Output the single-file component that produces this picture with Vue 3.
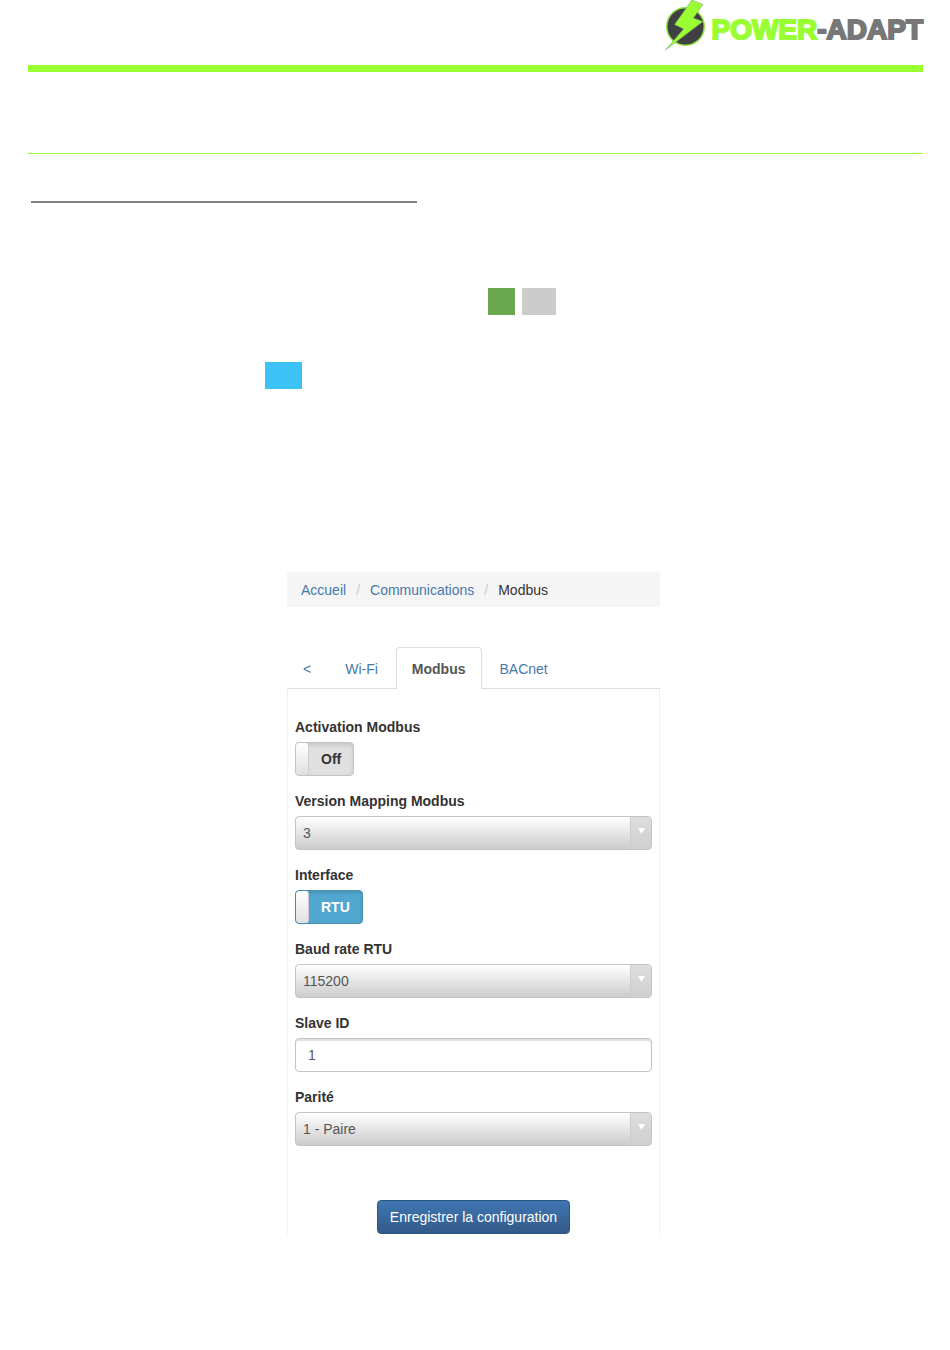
<template>
  <div class="page">
    <header class="page-header">
      <a class="brand" href="#" aria-label="Power-Adapt">
        <svg class="brand-mark" viewBox="0 0 42 52" aria-hidden="true">
          <circle cx="20.5" cy="26.5" r="19.5" fill="#8fe03c" />
          <circle cx="20.5" cy="26.5" r="18" fill="#3f4043" />
          <path d="M27 0 L38 4.5 L28.5 18 L38 21.5 L0.5 50 L18.5 29 L9.5 24.5 Z" fill="#99ff33" stroke="#7d8a70" stroke-width="0.5" />
        </svg>
        <span class="brand-name"><span class="brand-power">POWER</span>-ADAPT</span>
      </a>
    </header>

    <hr class="rule-thin" />
    <hr class="rule-title" />

    <div class="swatches">
      <span class="swatch swatch-green"></span>
      <span class="swatch swatch-grey"></span>
    </div>
    <div class="swatches swatches-second">
      <span class="swatch swatch-blue"></span>
    </div>

    <main class="screen">
      <nav class="breadcrumb" aria-label="Breadcrumb">
        <a href="#">Accueil</a>
        <span class="separator">/</span>
        <a href="#">Communications</a>
        <span class="separator">/</span>
        <span>Modbus</span>
      </nav>

      <nav class="tabs">
        <a v-for="tab in tabs" :key="tab" class="tab" :class="{ active: tab === 'Modbus' }" href="#">{{ tab }}</a>
      </nav>

      <form class="panel" @submit.prevent>
        <div v-for="field in fields" :key="field.id" class="field">
          <label class="field-label" :for="field.id">{{ field.label }}</label>

          <div v-if="field.type === 'switch'" class="switch" :class="{ on: field.value }">
            <input :id="field.id" v-model="field.value" class="switch-input" type="checkbox" />
            <span class="switch-handle"></span>
            <span class="switch-text">{{ field.value ? field.on : field.off }}</span>
          </div>

          <div v-else-if="field.type === 'select'" class="select">
            <select :id="field.id" v-model="field.value" class="select-input">
              <option v-for="option in field.options" :key="option">{{ option }}</option>
            </select>
            <span class="select-arrow">
              <svg width="7" height="6" viewBox="0 0 7 6" aria-hidden="true"><path d="M0 0 H7 L3.5 6 Z" fill="#fff" /></svg>
            </span>
          </div>

          <input v-else :id="field.id" v-model="field.value" class="text-input" type="text" />
        </div>

        <button class="save" type="submit">Enregistrer la configuration</button>
      </form>
    </main>
  </div>
</template>

<script setup>
import { reactive } from 'vue'

const tabs = ['<', 'Wi-Fi', 'Modbus', 'BACnet']

const fields = reactive([
  { id: 'activation', label: 'Activation Modbus', type: 'switch', value: false, on: 'On', off: 'Off' },
  { id: 'mapping', label: 'Version Mapping Modbus', type: 'select', value: '3', options: ['3'] },
  { id: 'interface', label: 'Interface', type: 'switch', value: true, on: 'RTU', off: 'TCP' },
  { id: 'baud', label: 'Baud rate RTU', type: 'select', value: '115200', options: ['115200'] },
  { id: 'slave', label: 'Slave ID', type: 'text', value: '1' },
  { id: 'parity', label: 'Parité', type: 'select', value: '1 - Paire', options: ['1 - Paire'] }
])
</script>

<style>
body {
  background: #fff;
}
</style>

<style scoped>
.page,
.page * {
  box-sizing: border-box;
}

.page {
  padding: 0 27px 40px 28px;
  font-family: "Liberation Sans", Arial, sans-serif;
  font-size: 14px;
  line-height: 20px;
  color: #333;
}

.page-header {
  display: flex;
  justify-content: flex-end;
  padding-bottom: 13px;
  border-bottom: 7px solid #99ff33;
}

.brand {
  display: flex;
  align-items: center;
  gap: 4px;
  color: #777;
  text-decoration: none;
}

.brand-mark {
  width: 42px;
  height: 52px;
}

.brand-name {
  padding-top: 8px;
  font-size: 28px;
  font-weight: bold;
  line-height: 32px;
  -webkit-text-stroke: 2px currentColor;
}

.brand-power {
  color: #99ff33;
}

.rule-thin {
  height: 0;
  margin: 81px 0 0;
  border: none;
  border-top: 1px solid #99ff33;
}

.rule-title {
  width: 386px;
  max-width: 100%;
  height: 2px;
  margin: 47px 0 0 3px;
  border: none;
  background: #808080;
}

.swatches {
  display: flex;
  gap: 7px;
  margin-top: 85px;
  padding-left: 460px;
}

.swatches-second {
  margin-top: 47px;
  padding-left: 237px;
}

.swatch {
  height: 27px;
}

.swatch-green {
  width: 27px;
  background: #6aa84f;
}

.swatch-grey {
  width: 34px;
  background: #ccc;
}

.swatch-blue {
  width: 37px;
  background: #3dc2f5;
}

.screen {
  width: 377px;
  max-width: 100%;
  margin: 183px auto 0;
  padding-right: 4px;
}

a {
  color: #4878a8;
  text-decoration: none;
}

.breadcrumb {
  display: flex;
  gap: 10px;
  padding: 8px 14px 7px;
  background: #f5f5f5;
}

.separator {
  color: #ccc;
}

.tabs {
  display: flex;
  gap: 2px;
  margin-top: 40px;
  border-bottom: 1px solid #ddd;
}

.tab {
  margin-bottom: -1px;
  padding: 11px 15px 10px;
  border: 1px solid transparent;
  border-bottom: none;
  border-radius: 4px 4px 0 0;
}

.tab.active {
  border-color: #ddd;
  background: #fff;
  color: #555;
  font-weight: bold;
}

.panel {
  display: flex;
  flex-direction: column;
  gap: 15px;
  padding: 28px 7px 0;
  border: 1px solid #f0f0f0;
  border-width: 0 1px;
}

.field {
  display: flex;
  flex-direction: column;
  align-items: flex-start;
  gap: 5px;
}

.field-label {
  font-weight: bold;
}

.switch {
  position: relative;
  display: flex;
  height: 34px;
  overflow: hidden;
  border: 1px solid #c4c4c4;
  border-radius: 4px;
  background: #e0e0e0;
  box-shadow: inset 0 2px 4px rgba(0, 0, 0, 0.12);
  font-weight: bold;
}

.switch.on {
  border-color: #4a8fb0;
  background: #51a7d0;
  color: #fff;
}

.switch-input {
  position: absolute;
  inset: 0;
  width: 100%;
  height: 100%;
  margin: 0;
  opacity: 0;
  cursor: pointer;
}

.switch-handle {
  width: 13px;
  border-right: 1px solid #ccc;
  border-radius: 3px;
  background: linear-gradient(#fff, #e0e0e0);
}

.switch-text {
  padding: 6px 12px;
}

.select {
  position: relative;
  width: 100%;
}

.select-input {
  display: block;
  width: 100%;
  height: 34px;
  padding: 0 30px 0 7px;
  border: 1px solid #c4c4c4;
  border-radius: 4px;
  background: linear-gradient(#fff, #ccc);
  color: #555;
  font: inherit;
  appearance: none;
}

.select-arrow {
  position: absolute;
  inset: 1px 1px 1px auto;
  display: flex;
  justify-content: center;
  width: 21px;
  padding-top: 11px;
  border-left: 1px solid #ccc;
  border-radius: 0 3px 3px 0;
  background: linear-gradient(#dedede, #cfcfcf);
  pointer-events: none;
}

.text-input {
  width: 100%;
  height: 34px;
  padding: 0 12px;
  border: 1px solid #c4c4c4;
  border-radius: 4px;
  background: #fff;
  box-shadow: inset 0 2px 1px rgba(0, 0, 0, 0.12);
  color: #555;
  font: inherit;
}

.save {
  align-self: center;
  height: 34px;
  margin-top: 39px;
  padding: 0 12px;
  border: 1px solid #2b5583;
  border-radius: 4px;
  background: linear-gradient(#4076b2, #325a88);
  color: #fff;
  font: inherit;
  cursor: pointer;
}
</style>
